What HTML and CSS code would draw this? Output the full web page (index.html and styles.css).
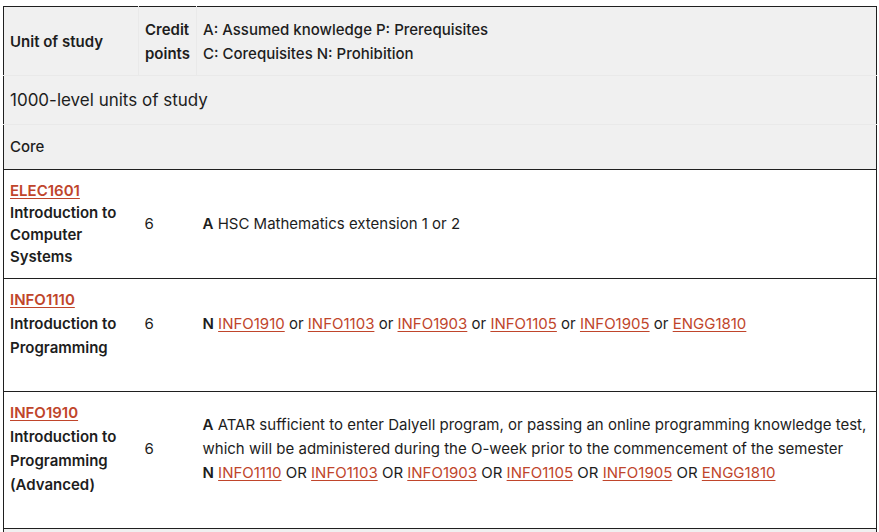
FILE: index.html
```html
<!DOCTYPE html>
<html lang="en">

<head>
  <meta charset="UTF-8">
  <meta name="viewport" content="width=device-width, initial-scale=1.0">
  <title>Units of study table</title>
  <link rel="stylesheet" href="styles.css">
</head>

<body>
  <div class="page">
    <table class="units">
      <colgroup>
        <col class="col-unit">
        <col class="col-cp">
        <col>
      </colgroup>
      <thead>
        <tr class="head-row">
          <th>Unit of study</th>
          <th class="sep">Credit points</th>
          <th class="sep key">A: Assumed knowledge P: Prerequisites<br>C: Corequisites N: Prohibition</th>
        </tr>
        <tr class="level-row">
          <th colspan="3">1000-level units of study</th>
        </tr>
        <tr class="group-row">
          <th colspan="3">Core</th>
        </tr>
      </thead>
      <tbody>
        <tr class="unit compact">
          <td><a href="#">ELEC1601</a><br><b>Introduction to Computer Systems</b></td>
          <td>6</td>
          <td><b>A</b> HSC Mathematics extension 1 or 2</td>
        </tr>
        <tr class="unit">
          <td><p><a href="#">INFO1110</a><br><b>Introduction to Programming</b></p></td>
          <td><p>6</p></td>
          <td><p><b>N</b> <a href="#">INFO1910</a> or <a href="#">INFO1103</a> or <a href="#">INFO1903</a> or <a href="#">INFO1105</a> or <a href="#">INFO1905</a> or <a href="#">ENGG1810</a></p></td>
        </tr>
        <tr class="unit">
          <td><p><a href="#">INFO1910</a><br><b>Introduction to Programming (Advanced)</b></p></td>
          <td><p>6</p></td>
          <td><p><b>A</b> ATAR sufficient to enter Dalyell program, or passing an online programming knowledge test, which will be administered during the O-week prior to the commencement of the semester<br><b>N</b> <a href="#">INFO1110</a> OR <a href="#">INFO1103</a> OR <a href="#">INFO1903</a> OR <a href="#">INFO1105</a> OR <a href="#">INFO1905</a> OR <a href="#">ENGG1810</a></p></td>
        </tr>
        <tr class="group-row">
          <th colspan="3">&nbsp;</th>
        </tr>
      </tbody>
    </table>
  </div>
</body>

</html>
```

FILE: styles.css
```css
:root {
  --ink: #1d1d1d;
  --rule: #1f1f1f;
  --head-bg: #f0f0f0;
  --soft-rule: #e9e9e9;
  --link: #c0452b;
}

body {
  margin: 0;
  font-family: Inter, 'Open Sans', sans-serif;
  font-size: 15px;
  color: var(--ink);
  background: #fff;
}

.page {
  padding: 6px 2px 0 3px;
}

.units {
  width: 100%;
  border-collapse: collapse;
  border: 1px solid var(--rule);
  table-layout: fixed;
}

.col-unit {
  width: 135px;
}

.col-cp {
  width: 58px;
}

th,
td {
  text-align: left;
  padding: 9px 6px;
  line-height: 24px;
}

thead th {
  background: var(--head-bg);
  font-weight: 600;
}

.head-row th {
  height: 50px;
  vertical-align: middle;
  padding-top: 10px;
  padding-bottom: 8px;
}

.head-row .sep {
  border-left: 1px solid var(--soft-rule);
}

.head-row .key {
  font-weight: 500;
}

.level-row th {
  border-top: 1px solid var(--soft-rule);
  font-size: 17px;
  font-weight: 400;
  padding: 12px 6px 12px;
}

.group-row th {
  border-top: 1px solid var(--soft-rule);
  font-weight: 500;
  padding: 10px 6px 10px;
}

tbody .group-row th {
  background: var(--head-bg);
  border-top: 1px solid var(--rule);
}

.unit td {
  border-top: 1px solid var(--rule);
  vertical-align: middle;
}

.unit p {
  margin: 0 0 22px;
}

.unit.compact td {
  line-height: 22px;
  padding: 10px 6px 10px;
}

b {
  font-weight: 600;
}

a {
  color: var(--link);
  text-decoration: underline;
  text-underline-offset: 2px;
}

td > a:first-child,
td > p > a:first-child {
  font-weight: 600;
}
```
